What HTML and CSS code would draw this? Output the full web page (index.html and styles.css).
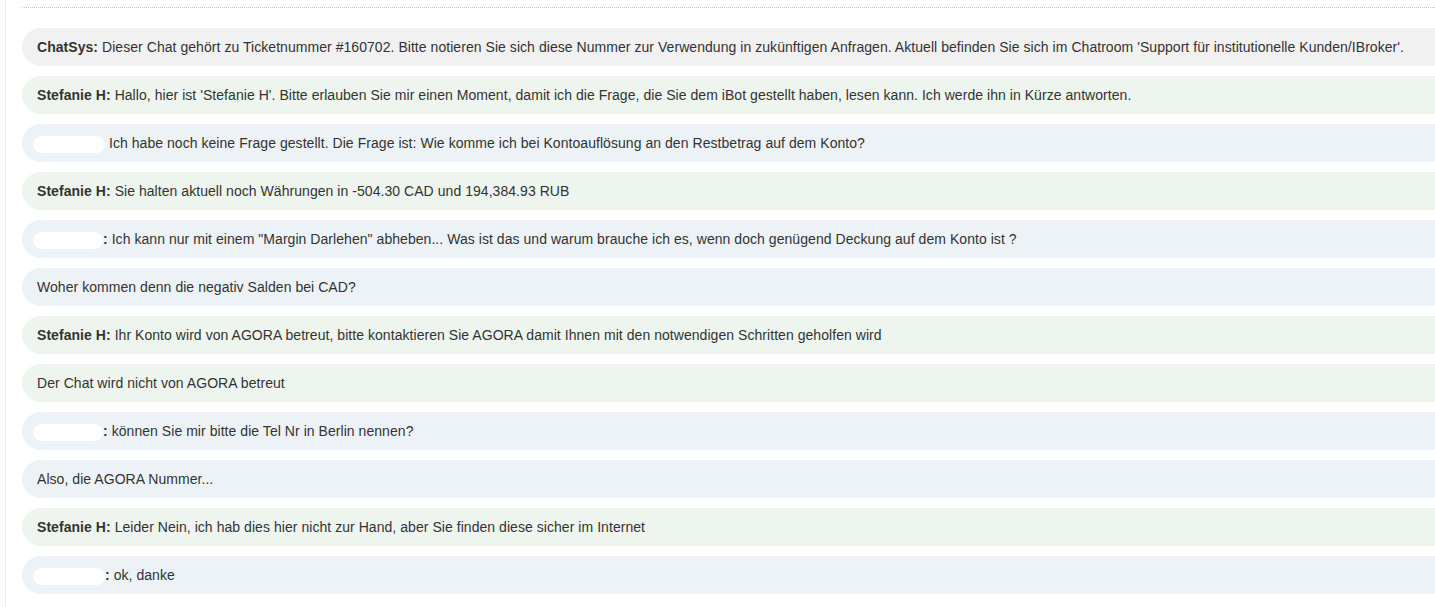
FILE: index.html
```html
<!DOCTYPE html>
<html lang="de">
<head>
<meta charset="utf-8">
<title>Chat</title>
<link rel="stylesheet" href="styles.css">
</head>
<body>
<div class="page">
  <div class="panel">
    <div class="divider"></div>
    <div class="chat">
      <div class="msg sys"><b>ChatSys:</b> Dieser Chat gehört zu Ticketnummer #160702. Bitte notieren Sie sich diese Nummer zur Verwendung in zukünftigen Anfragen. Aktuell befinden Sie sich im Chatroom 'Support für institutionelle Kunden/IBroker'.</div>
      <div class="msg agent"><b>Stefanie H:</b> Hallo, hier ist 'Stefanie H'. Bitte erlauben Sie mir einen Moment, damit ich die Frage, die Sie dem iBot gestellt haben, lesen kann. Ich werde ihn in Kürze antworten.</div>
      <div class="msg user"><span class="redact r1"></span> Ich habe noch keine Frage gestellt. Die Frage ist: Wie komme ich bei Kontoauflösung an den Restbetrag auf dem Konto?</div>
      <div class="msg agent"><b>Stefanie H:</b> Sie halten aktuell noch Währungen in -504.30 CAD und 194,384.93 RUB</div>
      <div class="msg user"><span class="redact r2"></span><b>:</b> Ich kann nur mit einem "Margin Darlehen" abheben... Was ist das und warum brauche ich es, wenn doch genügend Deckung auf dem Konto ist ?</div>
      <div class="msg user">Woher kommen denn die negativ Salden bei CAD?</div>
      <div class="msg agent"><b>Stefanie H:</b> Ihr Konto wird von AGORA betreut, bitte kontaktieren Sie AGORA damit Ihnen mit den notwendigen Schritten geholfen wird</div>
      <div class="msg agent">Der Chat wird nicht von AGORA betreut</div>
      <div class="msg user"><span class="redact r3"></span><b>:</b> können Sie mir bitte die Tel Nr in Berlin nennen?</div>
      <div class="msg user">Also, die AGORA Nummer...</div>
      <div class="msg agent"><b>Stefanie H:</b> Leider Nein, ich hab dies hier nicht zur Hand, aber Sie finden diese sicher im Internet</div>
      <div class="msg user"><span class="redact r4"></span><b>:</b> ok, danke</div>
    </div>
  </div>
</div>
</body>
</html>
```
FILE: styles.css
```css
html, body {
  margin: 0;
  padding: 0;
  background: #fff;
}
body {
  font-family: "Liberation Sans", Arial, sans-serif;
  font-size: 14px;
  letter-spacing: 0.05px;
  color: #333;
  overflow: hidden;
}
.page {
  padding-left: 5px;
  height: 607px;
}
.panel {
  border-left: 1px solid #ececec;
  height: 100%;
  padding: 7px 0 0 16px;
  box-sizing: border-box;
}
.divider {
  border-top: 1px dotted #c4c4c4;
  height: 0;
}
.chat {
  display: flex;
  flex-direction: column;
  gap: 10px;
  margin-top: 20px;
}
.msg {
  height: 38px;
  line-height: 38px;
  padding-left: 15px;
  border-radius: 19px 0 0 19px;
  white-space: nowrap;
}
.msg b {
  font-weight: bold;
}
.sys { background: #f1f1f1; }
.agent { background: #eef5ee; }
.user { background: #edf2f6; }
.redact {
  display: inline-block;
  vertical-align: middle;
  height: 17px;
  background: #fff;
  border-radius: 9px;
  margin-left: -4px;
}
.r1 { width: 72px; }
.r2 { width: 70px; }
.r3 { width: 70px; }
.r4 { width: 72px; }
```
